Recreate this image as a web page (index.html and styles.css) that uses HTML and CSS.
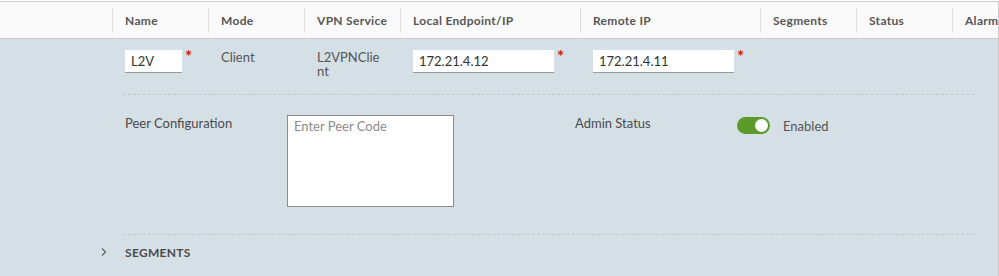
FILE: index.html
```html
<!DOCTYPE html>
<html lang="en">
<head>
    <meta charset="UTF-8">
    <title>L2VPN Session</title>
    <link rel="stylesheet" href="styles.css">
</head>
<body>
    <div class="grid">
        <div class="grid-head">
            <div class="col col-first"></div>
            <div class="col col-sm"><span class="head-cell">Name</span></div>
            <div class="col col-sm"><span class="head-cell">Mode</span></div>
            <div class="col col-sm"><span class="head-cell">VPN Service</span></div>
            <div class="col col-lg"><span class="head-cell">Local Endpoint/IP</span></div>
            <div class="col col-lg"><span class="head-cell">Remote IP</span></div>
            <div class="col col-sm"><span class="head-cell">Segments</span></div>
            <div class="col col-sm"><span class="head-cell">Status</span></div>
            <div class="col col-last"><span class="head-cell">Alarm</span></div>
        </div>

        <div class="grid-body">
            <div class="edit-row">
                <div class="col col-first"></div>
                <div class="col col-sm cell">
                    <input class="text-input name-input" type="text" value="L2V">
                    <span class="required">*</span>
                </div>
                <div class="col col-sm cell"><span class="cell-text">Client</span></div>
                <div class="col col-sm cell"><span class="cell-text wrap">L2VPNClient</span></div>
                <div class="col col-lg cell">
                    <input class="text-input ip-input" type="text" value="172.21.4.12">
                    <span class="required">*</span>
                </div>
                <div class="col col-lg cell">
                    <input class="text-input ip-input" type="text" value="172.21.4.11">
                    <span class="required">*</span>
                </div>
            </div>

            <div class="form-row">
                <div class="form-group">
                    <label class="form-label">Peer Configuration</label>
                    <textarea class="peer-code" placeholder="Enter Peer Code"></textarea>
                </div>
                <div class="form-group">
                    <label class="form-label">Admin Status</label>
                    <div class="toggle">
                        <span class="toggle-switch"><span class="toggle-knob"></span></span>
                        <span class="toggle-text">Enabled</span>
                    </div>
                </div>
            </div>

            <div class="section-row">
                <svg class="chevron" width="8" height="10" viewBox="0 0 8 10">
                    <path d="M2 1.5 L5.5 5 L2 8.5" fill="none" stroke="#5b6770" stroke-width="1.3"/>
                </svg>
                <span class="section-title">SEGMENTS</span>
            </div>
        </div>
    </div>
</body>
</html>
```

FILE: styles.css
```css
* {
    margin: 0;
    padding: 0;
    box-sizing: border-box;
}

body {
    font-family: 'Lato', 'Open Sans', sans-serif;
    font-size: 13px;
    color: #565656;
    background: #ffffff;
    padding-top: 1px;
    overflow: hidden;
}

.grid {
    width: 999px;
    height: 275px;
    border-top: 1px solid #cccccc;
    border-right: 1px solid #cccccc;
    background: #d5e0e6;
    display: flex;
    flex-direction: column;
}

.grid-head {
    display: flex;
    align-items: center;
    height: 37px;
    background: #fafafa;
    border-bottom: 1px solid #cccccc;
    white-space: nowrap;
    overflow: hidden;
}

.col {
    flex: none;
}

.col-first {
    width: 112px;
}

.col-sm {
    width: 96px;
}

.col-lg {
    width: 180px;
}

.col-last {
    flex: 1;
    min-width: 0;
}

.head-cell {
    display: block;
    border-left: 1px solid #dddddd;
    padding-left: 12px;
    line-height: 25px;
    font-size: 12px;
    font-weight: 700;
    letter-spacing: 0.3px;
    color: #565656;
}

.grid-body {
    flex: 1;
}

.edit-row {
    display: flex;
    padding-top: 11px;
    height: 55px;
}

.cell {
    padding-left: 13px;
    display: flex;
    align-items: flex-start;
}

.cell-text {
    line-height: 14px;
}

.cell-text.wrap {
    width: 68px;
    word-break: break-all;
}

.text-input {
    height: 23px;
    border: none;
    border-bottom: 1px solid #9a9a9a;
    background: #ffffff;
    padding: 0 6px;
    font-family: inherit;
    font-size: 13px;
    color: #333333;
    outline: none;
}

.name-input {
    width: 57px;
}

.ip-input {
    width: 141px;
}

.required {
    color: #c92100;
    font-size: 17px;
    font-weight: 700;
    margin-left: 3px;
    line-height: 14px;
}

.form-row {
    display: flex;
    margin-left: 123px;
    width: 851px;
    border-top: 1px dashed #c4c8ca;
    border-bottom: 1px dashed #c4c8ca;
    padding: 20px 0 27px 2px;
}

.form-group {
    flex: none;
    display: flex;
    align-items: flex-start;
    width: 450px;
}

.form-group:last-child {
    width: auto;
}

.form-label {
    flex: none;
    width: 162px;
    line-height: 16px;
    color: #4a4a4a;
}

.peer-code {
    width: 167px;
    height: 92px;
    border: 1px solid #8c8c8c;
    background: #ffffff;
    resize: none;
    padding: 2px 6px;
    font-family: inherit;
    font-size: 13px;
    color: #333333;
    outline: none;
}

.peer-code::placeholder {
    color: #8c8c8c;
}

.toggle {
    display: flex;
    align-items: center;
    gap: 13px;
    padding-top: 2px;
}

.toggle-switch {
    display: flex;
    justify-content: flex-end;
    align-items: center;
    width: 33px;
    height: 17px;
    border-radius: 9px;
    background: #5c9a2c;
    padding: 2px;
}

.toggle-knob {
    width: 13px;
    height: 13px;
    border-radius: 50%;
    background: #ffffff;
}

.toggle-text {
    color: #565656;
}

.section-row {
    display: flex;
    align-items: center;
    height: 34px;
    padding-left: 100px;
}

.chevron {
    margin-right: 17px;
}

.section-title {
    font-size: 12px;
    font-weight: 700;
    letter-spacing: 0.3px;
    color: #4a4a4a;
}
```
